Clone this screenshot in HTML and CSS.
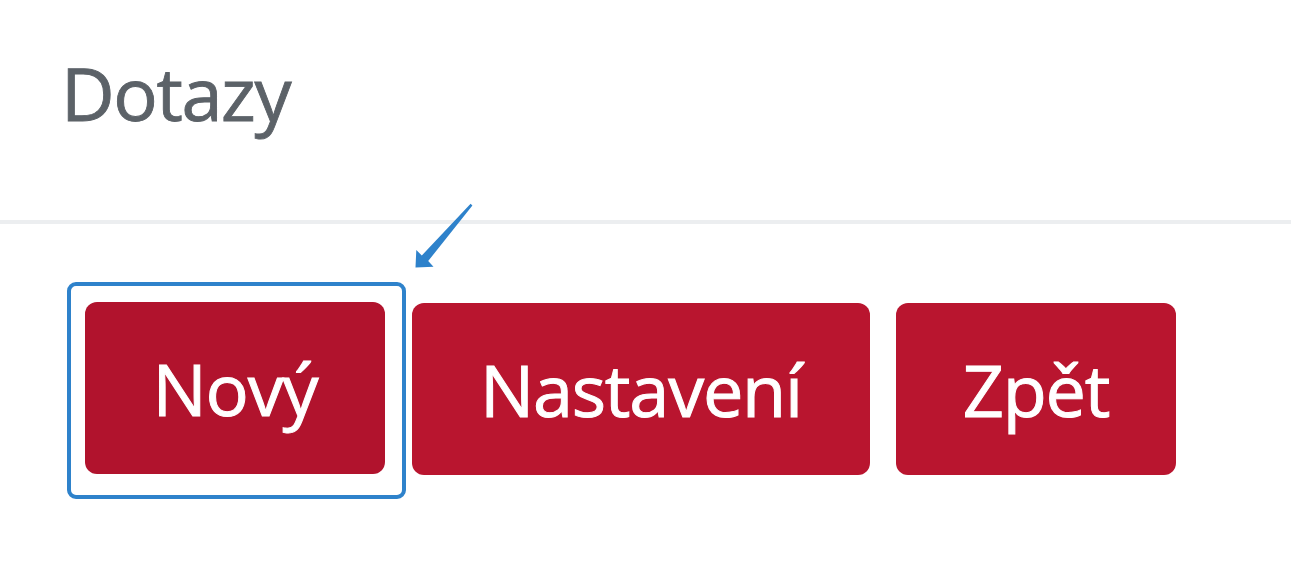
FILE: index.html
```html
<!DOCTYPE html>
<html>
<head>
    <title>Dotazy</title>
    <link rel="stylesheet" href="styles.css">
</head>
<body>
    <div class="page-header">
        <h1>Dotazy</h1>
    </div>

    <div class="toolbar">
        <div class="highlight">
            <button class="btn btn-new">Nový</button>
        </div>
        <button class="btn btn-settings">Nastavení</button>
        <button class="btn btn-back">Zpět</button>

        <!-- šipka k tlačítku Nový -->
        <svg class="pointer" width="70" height="72" viewBox="0 0 70 72">
            <polygon points="60.6,3.8 62.4,5.6 18.2,61 23.5,66.8 5.5,67.5 6.3,50 11.8,55.4" fill="#2e82cb"/>
        </svg>
    </div>
</body>
</html>
```

FILE: styles.css
```css
body {
    margin: 0;
    font-family: "Open Sans", "Liberation Sans", sans-serif;
    background: #fff;
}
.page-header {
    padding: 43px 0 77px 61px;
    border-bottom: 4px solid #eceef0;
}
.page-header h1 {
    margin: 0;
    font-size: 74px;
    font-weight: 400;
    line-height: 100px;
    color: #5c6268;
    letter-spacing: -1.4px;
    -webkit-text-stroke: 0.9px #5c6268;
}
.toolbar {
    position: relative;
    display: flex;
    align-items: flex-start;
    gap: 26px;
    margin-top: 58px;
    padding-left: 67px;
}
.highlight {
    padding: 16px 17px 21px 14px;
    border: 4px solid #2e82cb;
    border-radius: 9px;
    margin-right: -20px;
}
.btn {
    display: block;
    height: 172px;
    margin-top: 21px;
    padding: 0;
    border: none;
    border-radius: 12px;
    background: #b9152f;
    color: #fff;
    font-family: "Open Sans", "Liberation Sans", sans-serif;
    font-size: 72px;
    font-weight: 400;
    line-height: 1;
    letter-spacing: -1.2px;
    -webkit-text-stroke: 1px #fff;
    cursor: pointer;
}
.btn-new {
    width: 300px;
    margin-top: 0;
    background: #b1132d;
}
.btn-settings {
    width: 458px;
}
.btn-back {
    width: 280px;
}
.pointer {
    position: absolute;
    left: 410px;
    top: -82px;
}
```
